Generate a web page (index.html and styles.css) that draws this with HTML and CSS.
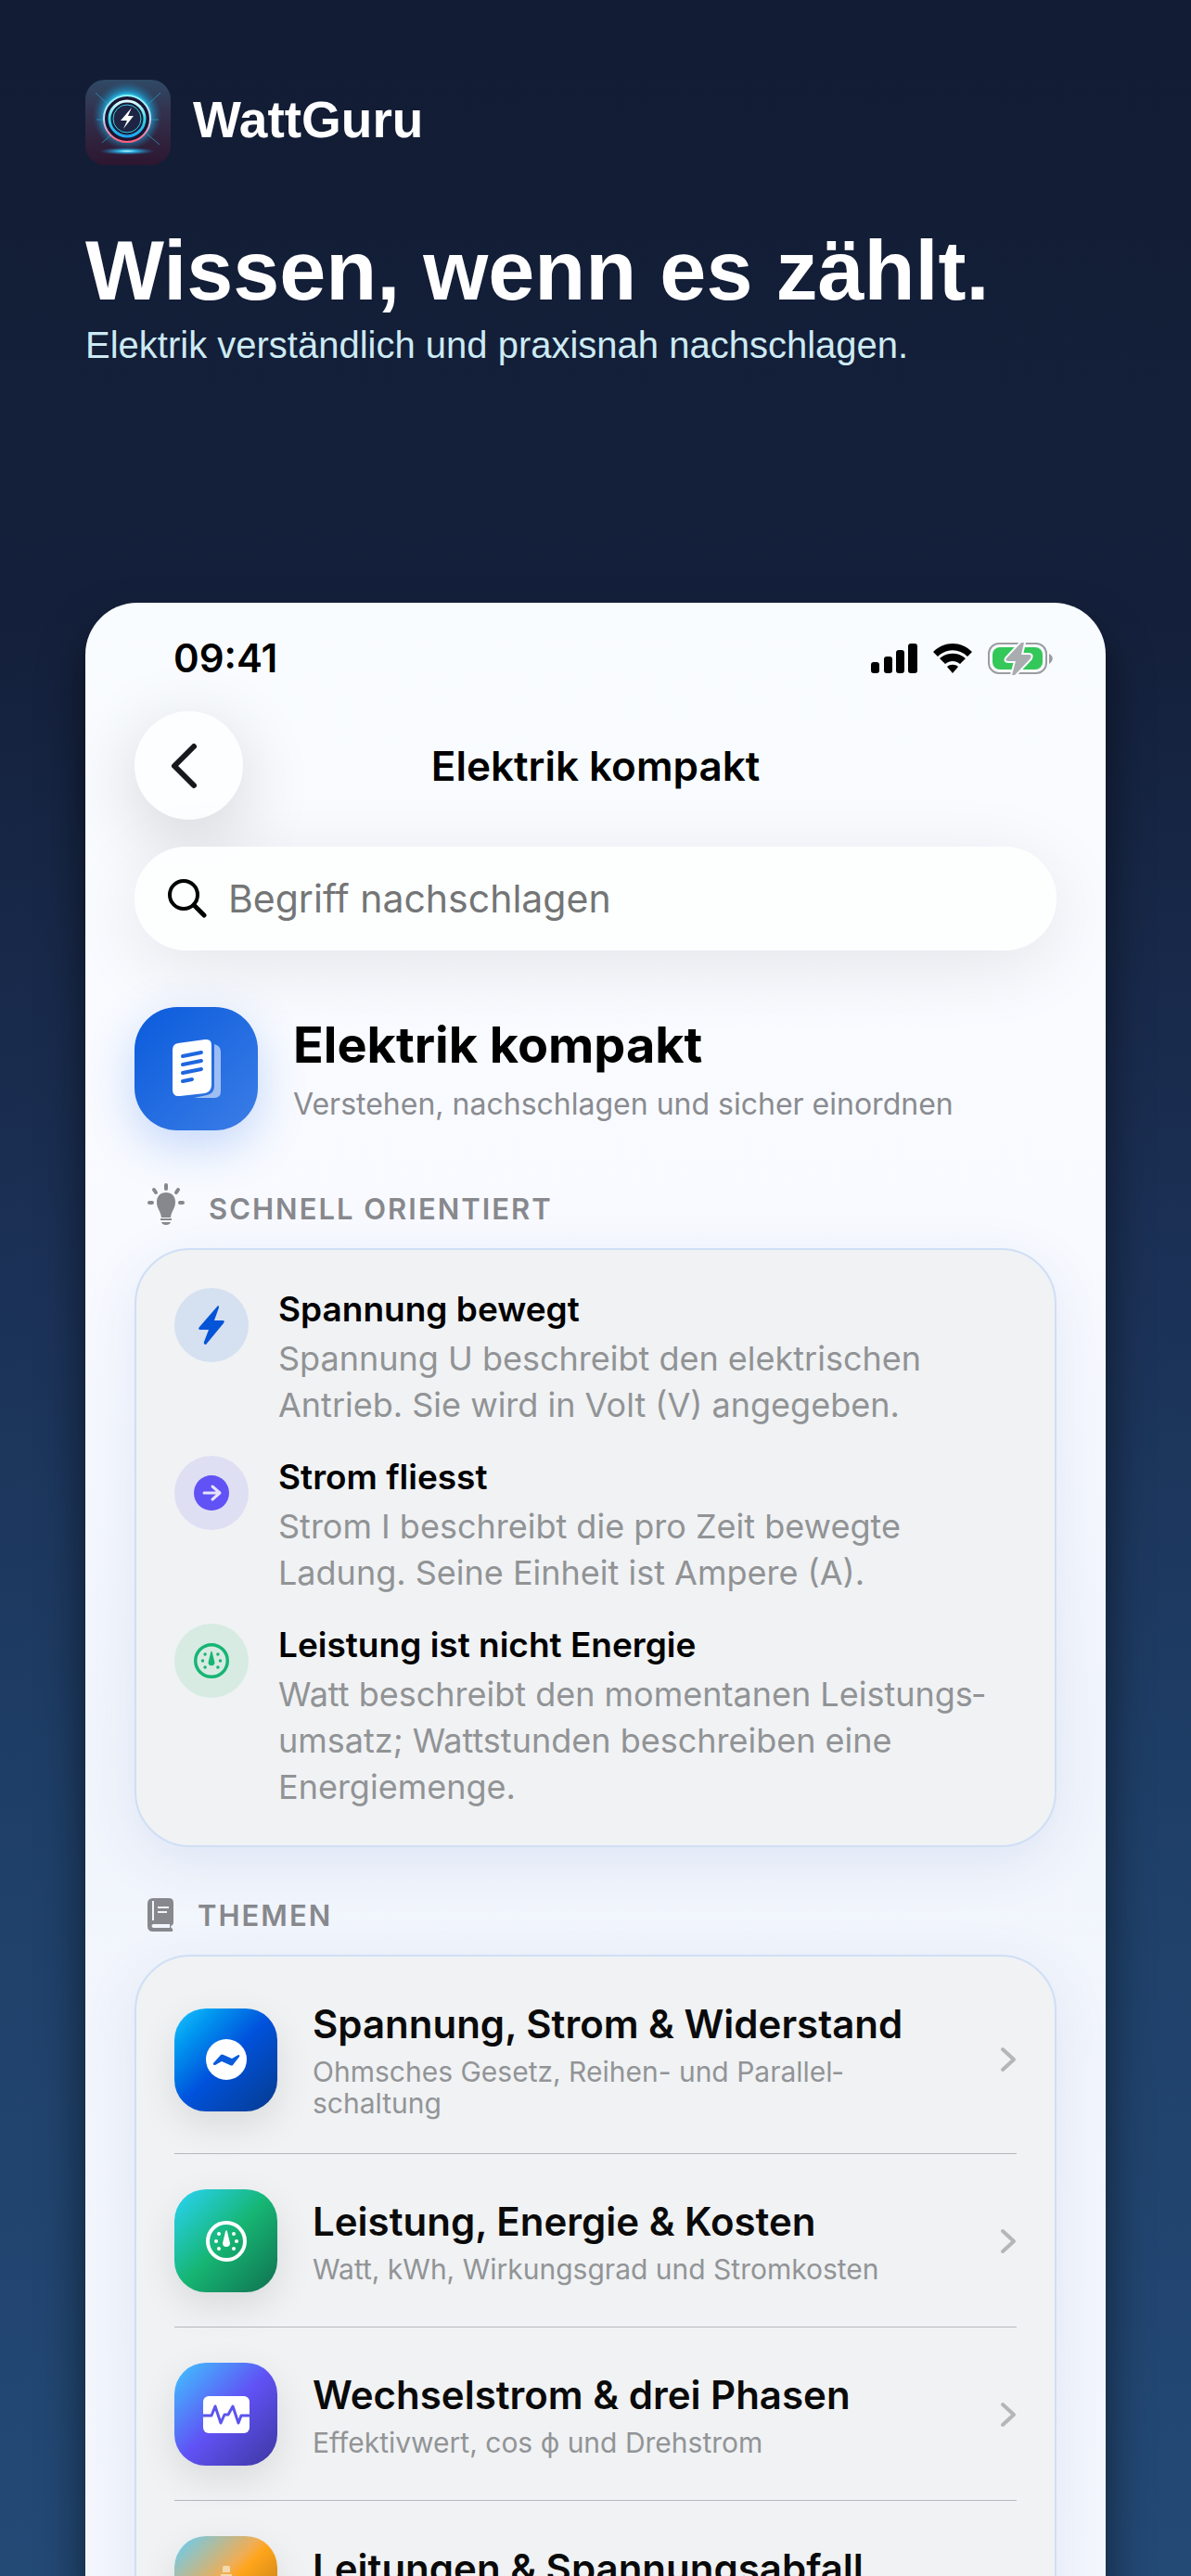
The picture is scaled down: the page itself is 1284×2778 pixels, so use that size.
FILE: index.html
```html
<!DOCTYPE html>
<html lang="de">
<head>
  <meta charset="UTF-8">
  <meta name="viewport" content="width=device-width, initial-scale=1.0">
  <title>WattGuru – Elektrik kompakt</title>
  <link rel="stylesheet" href="styles.css">
</head>
<body>
  <div class="poster">
    <header class="intro">
      <div class="brand">
        <svg class="brand-logo" viewBox="0 0 92 92" aria-hidden="true">
          <defs>
            <linearGradient id="logoBg" x1="0" y1="0" x2="0" y2="1">
              <stop offset="0" stop-color="#2f4a66"/>
              <stop offset="0.4" stop-color="#33304c"/>
              <stop offset="1" stop-color="#2d1630"/>
            </linearGradient>
            <radialGradient id="logoGlow">
              <stop offset="0.6" stop-color="#2ad0f4"/>
              <stop offset="0.75" stop-color="#1c9bd0" stop-opacity="0.6"/>
              <stop offset="1" stop-color="#1c6a94" stop-opacity="0"/>
            </radialGradient>
            <linearGradient id="logoRim" x1="0" y1="0" x2="0" y2="1">
              <stop offset="0" stop-color="#8ff6ff"/>
              <stop offset="0.5" stop-color="#c9dcf4"/>
              <stop offset="1" stop-color="#ff5d7c"/>
            </linearGradient>
            <linearGradient id="logoRing" x1="0" y1="0" x2="0" y2="1">
              <stop offset="0" stop-color="#e4feff"/>
              <stop offset="0.5" stop-color="#35d9e6"/>
              <stop offset="1" stop-color="#1ea4ee"/>
            </linearGradient>
            <radialGradient id="logoFlare">
              <stop offset="0" stop-color="#c5ffff"/>
              <stop offset="0.3" stop-color="#2fb9e6"/>
              <stop offset="1" stop-color="#1f6fb0" stop-opacity="0"/>
            </radialGradient>
          </defs>
          <rect width="92" height="92" rx="21" fill="url(#logoBg)"/>
          <circle cx="45" cy="39" r="37" fill="url(#logoGlow)"/>
          <path d="M11 14l14 13M81 14L67 27M12 43h8M79 43h-8M18 68l9-8M80 70L66 58" stroke="#2aa5c9" stroke-width="1" opacity="0.7"/>
          <circle cx="45" cy="42" r="25" fill="#1a1533" stroke="url(#logoRim)" stroke-width="2"/>
          <circle cx="45" cy="42" r="19" fill="#1b1a38" stroke="url(#logoRing)" stroke-width="3"/>
          <circle cx="45" cy="42" r="15" fill="#1d2444" stroke="#36cfe2" stroke-width="1"/>
          <path d="M50 30L38 44h7l-4 9 11-14h-6z" fill="#fff"/>
          <ellipse cx="45" cy="77" rx="30" ry="4" fill="url(#logoFlare)"/>
        </svg>
        <span class="brand-name">WattGuru</span>
      </div>
      <h1 class="headline">Wissen, wenn es zählt.</h1>
      <p class="tagline">Elektrik verständlich und praxisnah nachschlagen.</p>
    </header>

    <main class="phone">
      <div class="status">
        <span class="time">09:41</span>
        <div class="status-icons">
          <svg width="50" height="32" viewBox="0 0 50 32" aria-hidden="true">
            <rect x="0" y="20" width="9" height="12" rx="3"/>
            <rect x="14" y="14" width="9" height="18" rx="3"/>
            <rect x="27" y="7" width="9" height="25" rx="3"/>
            <rect x="40" y="0" width="10" height="32" rx="3"/>
          </svg>
          <svg width="42" height="32" viewBox="0 0 42 32" aria-hidden="true">
            <path d="M0 9C12-3 30-3 42 9L37 14C28 5 14 5 5 14z"/>
            <path d="M7 16C15 9 27 9 35 16L29 22C24 18 18 18 13 22z"/>
            <path d="M15 25C18 22 24 22 27 25L21 32z"/>
          </svg>
          <svg width="71" height="40" viewBox="0 0 71 40" aria-hidden="true">
            <rect x="1" y="4" width="62" height="32" rx="11" fill="none" stroke="#9b9da0" stroke-width="2"/>
            <path d="M66 15c5 2 5 8 0 11z" fill="#9b9da0"/>
            <rect x="5" y="8" width="54" height="24" rx="8" fill="#34c759"/>
            <path d="M36 3L20 20q-2 3 2 3h8l-4 15h3L46 20q2-4-2-4h-8l3-13z" fill="#a9adb0" stroke="#f9fbff" stroke-width="4" paint-order="stroke"/>
          </svg>
        </div>
      </div>

      <nav class="navbar">
        <button class="back" type="button" aria-label="Zurück">
          <svg width="34" height="52" viewBox="0 0 34 52" aria-hidden="true">
            <path d="M26 5L5 26l21 21" fill="none" stroke="#15191b" stroke-width="6" stroke-linecap="round" stroke-linejoin="round"/>
          </svg>
        </button>
        <span class="nav-title">Elektrik kompakt</span>
      </nav>

      <label class="search">
        <svg width="42" height="42" viewBox="0 0 42 42" aria-hidden="true">
          <circle cx="17" cy="17" r="15" fill="none" stroke="#000" stroke-width="4"/>
          <path d="M28 28l11 11" stroke="#000" stroke-width="5" stroke-linecap="round"/>
        </svg>
        <input class="search-input" type="search" placeholder="Begriff nachschlagen" aria-label="Begriff nachschlagen">
      </label>

      <section class="hero">
        <div class="hero-icon">
          <svg width="54" height="66" viewBox="0 0 54 66" aria-hidden="true">
            <path d="M46 6q7 2 7 8v43q0 7-7 7H24l14-3q8-2 8-9z" fill="#fff" opacity="0.55"/>
            <path d="M7 5L36 1q7-1 7 6v43q0 7-7 9L9 62q-8 1-8-7V12q0-6 6-7z" fill="#fff"/>
            <path d="M12 19l20-4M12 28l20-4M12 37l20-4M12 46l10-2" stroke="#1f67e0" stroke-width="4" stroke-linecap="round"/>
          </svg>
        </div>
        <div>
          <h2 class="hero-title">Elektrik kompakt</h2>
          <p class="hero-sub">Verstehen, nachschlagen und sicher einordnen</p>
        </div>
      </section>

      <h3 class="section-head first">
        <svg width="40" height="54" viewBox="0 0 40 54" aria-hidden="true">
          <path d="M20 10c6 0 10 4 10 10 0 8-4 9-5 17H15c-1-8-5-9-5-17 0-6 4-10 10-10z" fill="#87888d"/>
          <path d="M14 39h12" stroke="#87888d" stroke-width="2"/>
          <path d="M15 42h10q-1 3-5 3t-5-3z" fill="#87888d"/>
          <path d="M20 2v4M7 7l2 3M33 7l-2 3M2 21h3M35 21h3" stroke="#87888d" stroke-width="4" stroke-linecap="round"/>
        </svg>
        Schnell orientiert
      </h3>
      <ul class="card facts">
        <li class="fact">
          <div class="dot dot-blue">
            <svg width="28" height="42" viewBox="0 0 28 42" aria-hidden="true">
              <path d="M21 0L1 23q-2 3 1 3h9L6 39q-1 3 2 3L27 19q2-3-1-3h-9L22 2q0-2-1-2z" fill="#0454d8"/>
            </svg>
          </div>
          <div>
            <h4 class="fact-title">Spannung bewegt</h4>
            <p class="fact-text">Spannung U beschreibt den elektrischen Antrieb. Sie wird in Volt (V) angegeben.</p>
          </div>
        </li>
        <li class="fact">
          <div class="dot dot-violet">
            <svg width="38" height="38" viewBox="0 0 38 38" aria-hidden="true">
              <circle cx="19" cy="19" r="19" fill="#6052f5"/>
              <path d="M11 19h16M20 12l8 7-8 7" fill="none" stroke="#e6e3fb" stroke-width="3" stroke-linecap="round" stroke-linejoin="round"/>
            </svg>
          </div>
          <div>
            <h4 class="fact-title">Strom fliesst</h4>
            <p class="fact-text">Strom I beschreibt die pro Zeit bewegte Ladung. Seine Einheit ist Ampere (A).</p>
          </div>
        </li>
        <li class="fact">
          <div class="dot dot-green">
            <svg width="38" height="38" viewBox="0 0 44 44" fill="#16b573" aria-hidden="true">
              <circle cx="22" cy="22" r="20" fill="none" stroke="#16b573" stroke-width="4"/>
              <path d="M22 10q1 0 2 6l2 8q0 4-4 4t-4-4l2-8q1-6 2-6z"/>
              <circle cx="14" cy="14" r="2"/><circle cx="30" cy="14" r="2"/>
              <circle cx="11" cy="22" r="2"/><circle cx="33" cy="22" r="2"/>
              <circle cx="14" cy="30" r="2"/><circle cx="30" cy="30" r="2"/>
            </svg>
          </div>
          <div>
            <h4 class="fact-title">Leistung ist nicht Energie</h4>
            <p class="fact-text">Watt beschreibt den momentanen Leistungs&shy;umsatz; Wattstunden beschreiben eine Energiemenge.</p>
          </div>
        </li>
      </ul>

      <h3 class="section-head">
        <svg width="28" height="36" viewBox="0 0 28 36" aria-hidden="true">
          <path d="M6 0h17q5 0 5 5v21q0 3-3 4 0 2 2 3 1 3-1 3H6q-6 0-6-6V6q0-6 6-6z" fill="#87888d"/>
          <path d="M6 3v21" stroke="#f2f5fc" stroke-width="2"/>
          <path d="M11 10h12M11 15h10" stroke="#f2f5fc" stroke-width="2"/>
          <path d="M6 28h18v4H6q-3-2 0-4z" fill="#f2f5fc"/>
        </svg>
        Themen
      </h3>
      <div class="card topics">
        <a class="topic" href="#widerstand">
          <span class="tile tile-blue">
            <svg width="44" height="44" viewBox="0 0 44 44" aria-hidden="true">
              <circle cx="22" cy="22" r="22" fill="#fff"/>
              <path d="M8 26l8-9q1-1 3 0l9 4 7-4q2 0 1 2l-7 9q-1 1-3 0l-9-4-7 4q-3 0-2-2z" fill="#0a5bdc"/>
            </svg>
          </span>
          <span class="topic-body">
            <span class="topic-title">Spannung, Strom &amp; Widerstand</span>
            <span class="topic-sub">Ohmsches Gesetz, Reihen- und Parallel&shy;schaltung</span>
          </span>
          <svg class="chevron" width="18" height="28" viewBox="0 0 18 28" aria-hidden="true"><path d="M3 3l12 11L3 25"/></svg>
        </a>
        <a class="topic" href="#leistung">
          <span class="tile tile-green">
            <svg width="44" height="44" viewBox="0 0 44 44" fill="#fff" aria-hidden="true">
              <circle cx="22" cy="22" r="20" fill="none" stroke="#fff" stroke-width="4"/>
              <path d="M22 10q1 0 2 6l2 8q0 4-4 4t-4-4l2-8q1-6 2-6z"/>
              <circle cx="14" cy="14" r="2"/><circle cx="30" cy="14" r="2"/>
              <circle cx="11" cy="22" r="2"/><circle cx="33" cy="22" r="2"/>
              <circle cx="14" cy="30" r="2"/><circle cx="30" cy="30" r="2"/>
            </svg>
          </span>
          <span class="topic-body">
            <span class="topic-title">Leistung, Energie &amp; Kosten</span>
            <span class="topic-sub">Watt, kWh, Wirkungsgrad und Stromkosten</span>
          </span>
          <svg class="chevron" width="18" height="28" viewBox="0 0 18 28" aria-hidden="true"><path d="M3 3l12 11L3 25"/></svg>
        </a>
        <a class="topic" href="#wechselstrom">
          <span class="tile tile-violet">
            <svg width="50" height="40" viewBox="0 0 50 40" aria-hidden="true">
              <rect width="50" height="40" rx="6" fill="#fff"/>
              <path d="M0 21h9l4-10 6 18 4-9h4l5-9 6 18 3-8h9" fill="none" stroke="#5b55ee" stroke-width="3" stroke-linejoin="round"/>
            </svg>
          </span>
          <span class="topic-body">
            <span class="topic-title">Wechselstrom &amp; drei Phasen</span>
            <span class="topic-sub">Effektivwert, cos ϕ und Drehstrom</span>
          </span>
          <svg class="chevron" width="18" height="28" viewBox="0 0 18 28" aria-hidden="true"><path d="M3 3l12 11L3 25"/></svg>
        </a>
        <a class="topic" href="#leitungen">
          <span class="tile tile-orange">
            <svg width="44" height="48" viewBox="0 0 44 48" aria-hidden="true">
              <path d="M18 7V2q0-2 2-2h4q2 0 2 2v5zM16 9h12v39H16z" fill="#f3d9ae"/>
            </svg>
          </span>
          <span class="topic-body">
            <span class="topic-title">Leitungen &amp; Spannungsabfall</span>
          </span>
          <svg class="chevron" width="18" height="28" viewBox="0 0 18 28" aria-hidden="true"><path d="M3 3l12 11L3 25"/></svg>
        </a>
      </div>
    </main>
  </div>
</body>
</html>
```

FILE: styles.css
```css
* {
  box-sizing: border-box;
  margin: 0;
  padding: 0;
}
body {
  font-family: Inter, "Noto Sans", sans-serif;
  color: #000;
}
.poster {
  height: 100vh;
  overflow: hidden;
  padding: 86px 92px 0;
  background: linear-gradient(#121c34 0%, #14203b 24%, #1b3055 48%, #1f4069 72%, #234975 100%);
}

/* intro */
.intro {
  font-family: "Liberation Sans", Arial, sans-serif;
  color: #fff;
  min-height: 564px;
}
.brand {
  display: flex;
  align-items: center;
  gap: 24px;
}
.brand-logo {
  width: 92px;
  height: 92px;
}
.brand-name {
  padding-bottom: 6px;
  font-size: 55px;
  font-weight: bold;
}
.headline {
  margin-top: 64px;
  font-size: 90px;
  line-height: 100px;
}
.tagline {
  margin-top: 6px;
  font-size: 40px;
  line-height: 48px;
  color: #cdeaf3;
}

/* phone */
.phone {
  padding: 0 53px;
  border-radius: 56px 56px 0 0;
  background: linear-gradient(#f9fcff, #f8faff 30%, #f1f5fc 55%, #f4f7fd);
  box-shadow: 0 28px 48px rgba(0, 0, 0, 0.55);
}
.status {
  display: flex;
  align-items: center;
  justify-content: space-between;
  height: 117px;
  padding: 2px 3px 0 42px;
}
.time {
  font-size: 42px;
  font-weight: 600;
}
.status-icons {
  display: flex;
  align-items: center;
  gap: 17px;
}
.navbar {
  display: grid;
  grid-template-columns: 117px 1fr 117px;
  align-items: center;
}
.back {
  display: flex;
  align-items: center;
  justify-content: center;
  width: 117px;
  height: 117px;
  padding-right: 8px;
  border: none;
  border-radius: 50%;
  background: #fdfeff;
  box-shadow: 0 20px 80px rgba(0, 0, 0, 0.16);
}
.nav-title {
  font-size: 44px;
  font-weight: 600;
  text-align: center;
}
.search {
  position: relative;
  display: flex;
  align-items: center;
  gap: 23px;
  height: 112px;
  margin-top: 29px;
  padding: 0 36px;
  border-radius: 56px;
  background: rgba(253, 255, 255, 0.93);
  box-shadow: 0 16px 80px rgba(0, 0, 0, 0.09);
}
.search-input {
  flex: 1;
  min-width: 0;
  border: none;
  outline: none;
  background: none;
  font-family: inherit;
  font-size: 41px;
}
.search-input::placeholder {
  color: #747576;
}
.hero {
  position: relative;
  display: flex;
  align-items: center;
  gap: 38px;
  margin-top: 61px;
}
.hero-icon {
  display: flex;
  align-items: center;
  justify-content: center;
  width: 133px;
  height: 133px;
  border-radius: 46px;
  background: linear-gradient(135deg, #0a5bdc, #3b7de6);
  box-shadow: 0 16px 50px rgba(40, 110, 235, 0.25);
}
.hero-title {
  font-size: 54px;
  font-weight: 700;
  line-height: 68px;
}
.hero-sub {
  font-size: 32px;
  line-height: 44px;
  margin-top: 8px;
  color: #8a8b90;
}
.section-head {
  display: flex;
  align-items: center;
  gap: 26px;
  height: 54px;
  margin: 46px 0 16px;
  padding-left: 14px;
  font-size: 31px;
  font-weight: 600;
  letter-spacing: 2px;
  text-transform: uppercase;
  color: #87888d;
}
.section-head.first {
  margin-top: 57px;
}
.card {
  border: 2px solid #cfdff5;
  border-radius: 60px;
  background: #f0f2f4;
  box-shadow: 0 16px 60px rgba(60, 90, 180, 0.1);
}

/* facts */
.facts {
  display: flex;
  flex-direction: column;
  gap: 30px;
  padding: 41px 41px 38px;
  list-style: none;
}
.fact {
  display: flex;
  gap: 32px;
}
.dot {
  display: flex;
  flex: none;
  align-items: center;
  justify-content: center;
  width: 80px;
  height: 80px;
  border-radius: 50%;
}
.dot-blue {
  background: #d5e0f0;
}
.dot-violet {
  background: #dfdff3;
}
.dot-green {
  background: #d7ebe3;
}
.fact-title {
  font-size: 37px;
  font-weight: 600;
  line-height: 46px;
}
.fact-text {
  margin-top: 5px;
  font-size: 36px;
  line-height: 50px;
  color: #919395;
}

/* topics */
.topics {
  padding: 9px 41px;
}
.topic {
  display: flex;
  align-items: center;
  padding: 38px 0 37px;
  border-bottom: 1px solid #b6b9bc;
  color: #0a0a0a;
  text-decoration: none;
}
.topic:last-child {
  border-bottom: none;
}
.tile {
  display: flex;
  flex: none;
  align-items: center;
  justify-content: center;
  width: 111px;
  height: 111px;
  margin-right: 38px;
  border-radius: 34px;
  box-shadow: 0 14px 40px rgba(0, 0, 0, 0.1);
}
.tile-blue {
  background: linear-gradient(135deg, #1fc4ff, #0099f0 20%, #0052dc 50%, #063a8c);
}
.tile-green {
  background: linear-gradient(135deg, #2ad4f8, #16b573 50%, #107050);
}
.tile-violet {
  background: linear-gradient(135deg, #3fc6ff, #6052f5 50%, #3d37a0);
}
.tile-orange {
  background: linear-gradient(135deg, #5ccfff, #f0ad55 42%, #ffa51a 50%, #a06a1a);
}
.topic-body {
  flex: 1;
  min-width: 0;
  min-height: 94px;
  padding-right: 90px;
}
.topic-title,
.topic-sub {
  display: block;
}
.topic-title {
  font-size: 42px;
  font-weight: 600;
  line-height: 52px;
}
.topic-sub {
  margin-top: 8px;
  font-size: 30px;
  line-height: 34px;
  color: #929496;
}
.chevron {
  flex: none;
}
.chevron path {
  fill: none;
  stroke: #b4b6b8;
  stroke-width: 4;
  stroke-linecap: round;
  stroke-linejoin: round;
}
```
